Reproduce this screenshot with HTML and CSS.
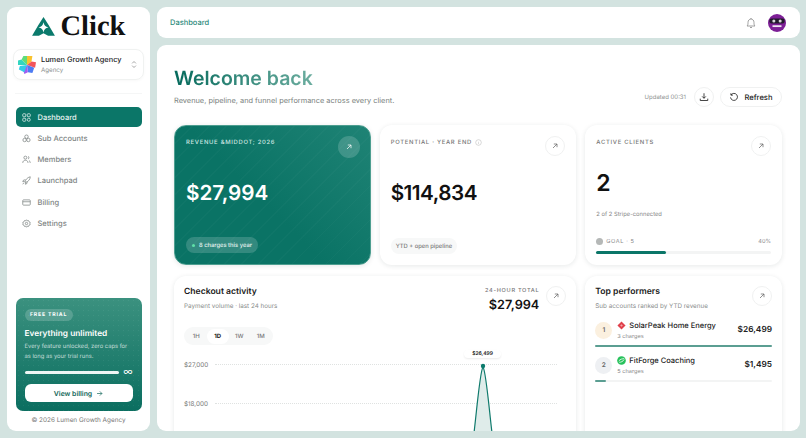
FILE: index.html
```html
<!DOCTYPE html>
<html lang="en">
  <head>
    <meta charset="UTF-8" />
    <meta name="viewport" content="width=device-width, initial-scale=1.0" />
    <title>Dashboard</title>
    <link rel="stylesheet" href="styles.css">
  </head>
  <body>
    <aside class="sidebar">
      <div class="brand">
        <svg class="brand-mark" viewBox="0 0 24 21"><path fill="#0b7a6c" d="M12 0l5.2 8.2L24 19.6h-7.2L12 17l-4.800 2.600H0L6.800 8.200z"/><path fill="#fff" d="M12 5.500c.6 3.300 2 4.800 5.200 5.400-3.200.6-4.600 2.100-5.200 5.400-.6-3.300-2-4.800-5.200-5.400 3.200-.6 4.600-2.100 5.200-5.400z"/></svg>
        <span class="brand-name">Click</span>
      </div>

      <div class="org">
        <svg class="org-logo" viewBox="0 0 20 20">
          <path fill="#f9c22e" d="M10 0h6l-1 6-5 4z"/>
          <path fill="#f2545b" d="M10 10l5-4 5 1-1 6z"/>
          <path fill="#4d7cf3" d="M10 10l8 3-2 6-5-1z"/>
          <path fill="#a05cf0" d="M10 10l1 8-4 2-1-4z"/>
          <path fill="#35cbe8" d="M10 10l-3 8-6-3 1-4z"/>
          <path fill="#33d6c0" d="M10 10H0V5l4-1z"/>
          <path fill="#5fdc7a" d="M10 10L4 4l2-4h4z"/>
        </svg>
        <div class="org-text">
          <div class="org-name">Lumen Growth Agency</div>
          <div class="org-type">Agency</div>
        </div>
        <svg class="org-caret" viewBox="0 0 8 12"><path d="M1.5 4.500L4 2l2.500 2.500M1.500 7.500L4 10l2.500-2.500"/></svg>
      </div>

      <div class="side-rule"></div>

      <nav class="nav">
        <a class="nav-item active"><svg viewBox="0 0 12 12"><rect x="1" y="1" width="4" height="4" rx="1"/><rect x="7" y="1" width="4" height="4" rx="1"/><rect x="1" y="7" width="4" height="4" rx="1"/><rect x="7" y="7" width="4" height="4" rx="2"/></svg>Dashboard</a>
        <a class="nav-item"><svg viewBox="0 0 12 12"><circle cx="6" cy="3.600" r="2.300"/><circle cx="3.500" cy="8" r="2.300"/><circle cx="8.500" cy="8" r="2.300"/></svg>Sub Accounts</a>
        <a class="nav-item"><svg viewBox="0 0 12 12"><circle cx="4.500" cy="3.500" r="2"/><path d="M1 10.500c0-2.200 1.500-3.500 3.500-3.500s3.500 1.300 3.500 3.500M8 1.700a2 2 0 010 3.700M9.300 7.300c1 .5 1.700 1.600 1.700 3.200"/></svg>Members</a>
        <a class="nav-item"><svg viewBox="0 0 12 12"><path d="M4 8C4.500 5 7 2 11 1c0 4-3 6.500-6 7.500zM4.500 5L2 5.500 1 7.500l2.500 0M7 7.500l-.5 2.500-2 1 0-2.500M2.500 9L1 11"/></svg>Launchpad</a>
        <a class="nav-item"><svg viewBox="0 0 12 12"><rect x="1" y="2.500" width="10" height="7" rx="1"/><path d="M1 5h10"/></svg>Billing</a>
        <a class="nav-item"><svg viewBox="0 0 12 12"><circle cx="6" cy="6" r="1.600"/><path d="M6 1l1 1.400 1.700-.3.600 1.600 1.600.7-.3 1.600.3 1.600-1.600.7-.6 1.600-1.700-.3L6 11l-1-1.400-1.700.3-.6-1.600-1.600-.7.3-1.600-.3-1.600 1.600-.7.6-1.600 1.700.3z"/></svg>Settings</a>
      </nav>

      <div class="trial">
        <span class="trial-tag">FREE TRIAL</span>
        <div class="trial-title">Everything unlimited</div>
        <p class="trial-copy">Every feature unlocked, zero caps for as long as your trial runs.</p>
        <div class="trial-meter"><div class="trial-bar"></div><span class="trial-inf">∞</span></div>
        <button class="trial-btn">View billing <svg viewBox="0 0 10 10"><path d="M1.500 5h7M5.500 2l3 3-3 3"/></svg></button>
      </div>
      <div class="side-foot">© 2026 Lumen Growth Agency</div>
    </aside>

    <div class="right">
      <header class="topbar">
        <span class="crumb">Dashboard</span>
        <div class="top-actions">
          <svg class="bell" viewBox="0 0 12 12"><path d="M2 9c.8-.8 1-1.500 1-3.500C3 3.500 4.300 2 6 2s3 1.500 3 3.500c0 2 .2 2.700 1 3.500zM5 10.500h2M6 1v1"/></svg>
          <svg class="avatar" viewBox="0 0 20 20"><circle cx="10" cy="10" r="10" fill="#7d1f96"/><rect x="1.500" y="5" width="17" height="5.500" rx="2.500" fill="#221a2c"/><circle cx="6.500" cy="7.700" r="1.700" fill="#d8d8d8"/><circle cx="13.500" cy="7.700" r="1.700" fill="#d8d8d8"/><rect x="5" y="12.500" width="10" height="2" fill="#efe6f2"/></svg>
        </div>
      </header>

      <main class="main">
        <div class="page-head">
          <div>
            <h1 class="welcome">Welcome back</h1>
            <p class="welcome-sub">Revenue, pipeline, and funnel performance across every client.</p>
          </div>
          <div class="head-actions">
            <span class="updated">Updated 00:31</span>
            <button class="round-btn"><svg viewBox="0 0 12 12"><path d="M6 1.500v6M3.800 5.300L6 7.500l2.200-2.200M1.500 8v2.200h9V8"/></svg></button>
            <button class="refresh"><svg viewBox="0 0 12 12"><path d="M2.500 3.500A4.200 4.200 0 111.800 6.500M2.300 1.500v2.300h2.300"/></svg>Refresh</button>
          </div>
        </div>

        <div class="grid">
          <section class="card stat hero">
            <div class="stat-top">
              <span class="label">REVENUE &amp;MIDDOT; 2026</span>
              <button class="arrow-btn"><svg viewBox="0 0 10 10"><path d="M2.500 7.500l5-5M3.500 2.500h4v4"/></svg></button>
            </div>
            <div class="stat-value">$27,994</div>
            <span class="chip"><i class="chip-dot"></i>8 charges this year</span>
          </section>

          <section class="card stat">
            <div class="stat-top">
              <span class="label">POTENTIAL · YEAR END <svg class="info" viewBox="0 0 10 10"><circle cx="5" cy="5" r="4"/><path d="M5 4.500v2.500M5 3v.4"/></svg></span>
              <button class="arrow-btn"><svg viewBox="0 0 10 10"><path d="M2.500 7.500l5-5M3.500 2.500h4v4"/></svg></button>
            </div>
            <div class="stat-value tight">$114,834</div>
            <span class="chip">YTD + open pipeline</span>
          </section>

          <section class="card stat">
            <div class="stat-top">
              <span class="label">ACTIVE CLIENTS</span>
              <button class="arrow-btn"><svg viewBox="0 0 10 10"><path d="M2.500 7.500l5-5M3.500 2.500h4v4"/></svg></button>
            </div>
            <div class="stat-value clients">2</div>
            <div class="stat-note">2 of 2 Stripe-connected</div>
            <div class="goal-row">
              <span class="goal"><i class="goal-dot"></i>GOAL · 5</span><span class="goal-pct">40%</span>
            </div>
            <div class="track"><div class="fill" style="width: 40%"></div></div>
          </section>

          <section class="card activity">
            <div class="activity-head">
              <div>
                <h2 class="card-title">Checkout activity</h2>
                <div class="card-sub">Payment volume · last 24 hours</div>
              </div>
              <div class="total">
                <div class="total-text">
                  <div class="total-label">24-HOUR TOTAL</div>
                  <div class="total-value">$27,994</div>
                </div>
                <button class="arrow-btn"><svg viewBox="0 0 10 10"><path d="M2.500 7.500l5-5M3.500 2.500h4v4"/></svg></button>
              </div>
            </div>
            <div class="ranges">
              <span>1H</span><span class="on">1D</span><span>1W</span><span>1M</span>
            </div>
            <div class="chart">
              <div class="chart-row"><span>$27,000</span><i></i></div>
              <div class="chart-row"><span>$18,000</span><i></i></div>
              <svg class="peak" viewBox="0 0 20 70">
                <path class="peak-area" d="M1 70C4 45 7 8 10 4c3 4 6 41 9 66z"/>
                <path class="peak-line" d="M1 70C4 45 7 8 10 4c3 4 6 41 9 66"/>
                <circle cx="10" cy="3" r="2.200" fill="#0b7a6c"/>
              </svg>
              <div class="peak-tip">$26,499</div>
            </div>
          </section>

          <section class="card performers">
            <div class="perf-head">
              <div>
                <h2 class="card-title">Top performers</h2>
                <div class="card-sub">Sub accounts ranked by YTD revenue</div>
              </div>
              <button class="arrow-btn"><svg viewBox="0 0 10 10"><path d="M2.500 7.500l5-5M3.500 2.500h4v4"/></svg></button>
            </div>
            <div class="perf">
              <div class="perf-row">
                <span class="rank gold">1</span>
                <div class="perf-info">
                  <div class="perf-name"><svg viewBox="0 0 10 10"><path fill="#e0414c" d="M5 .5L9.500 5 5 9.500.5 5z"/><path fill="#f4a3a8" d="M5 3.500L6.500 5 5 6.500 3.500 5z"/></svg>SolarPeak Home Energy</div>
                  <div class="perf-sub">3 charges</div>
                </div>
                <span class="perf-amt">$26,499</span>
              </div>
              <div class="perf-track"><div class="perf-fill" style="width: 100%"></div></div>
            </div>
            <div class="perf">
              <div class="perf-row">
                <span class="rank silver">2</span>
                <div class="perf-info">
                  <div class="perf-name"><svg viewBox="0 0 10 10"><circle cx="5" cy="5" r="4.800" fill="#27c25c"/><path d="M2 5.500c1.500-2 4-2.500 6-2.500M2.500 7c2 0 4-1 5.500-3" fill="none" stroke="#fff" stroke-width=".9"/></svg>FitForge Coaching</div>
                  <div class="perf-sub">5 charges</div>
                </div>
                <span class="perf-amt">$1,495</span>
              </div>
              <div class="perf-track"><div class="perf-fill" style="width: 6%"></div></div>
            </div>
          </section>
        </div>
      </main>
    </div>
  </body>
</html>
```

FILE: styles.css
```css
*,
body {
  margin: 0;
  padding: 0;
  box-sizing: border-box;
}
body {
  background: #d3e3e0;
  height: 100vh;
  width: 100vw;
  overflow: hidden;
  display: flex;
  gap: 7px;
  padding: 7px 6px 7px 7px;
  font-family: Inter, "Liberation Sans", sans-serif;
  text-rendering: geometricPrecision;
  color: #111;
}
button {
  font-family: inherit;
  text-rendering: inherit;
  border: none;
  background: none;
}
svg {
  display: block;
}

/* sidebar */
.sidebar {
  width: 143px;
  flex: none;
  background: #fff;
  border-radius: 9px;
  padding: 0 6px;
  display: flex;
  flex-direction: column;
}
.brand {
  height: 38px;
  display: flex;
  align-items: center;
  justify-content: center;
  gap: 6px;
  margin-top: 1px;
}
.brand-mark {
  width: 23px;
  height: 20px;
}
.brand-name {
  font-family: "Liberation Serif", serif;
  font-weight: 700;
  font-size: 28.5px;
  line-height: 1;
  color: #111;
}
.org {
  margin-top: 3px;
  height: 31px;
  border: 1px solid #f0f2f1;
  border-radius: 8px;
  display: flex;
  align-items: center;
  padding: 0 6px 0 4px;
  gap: 5px;
  box-shadow: 0 1px 3px rgba(0, 0, 0, 0.03);
}
.org-logo {
  width: 18px;
  height: 18px;
  flex: none;
}
.org-text {
  flex: 1;
  min-width: 0;
}
.org-name {
  font-size: 7.4px;
  font-weight: 500;
  line-height: 10px;
  white-space: nowrap;
  color: #222;
}
.org-type {
  font-size: 6.2px;
  line-height: 9px;
  margin-top: 1px;
  color: #8a8f8e;
}
.org-caret {
  width: 6px;
  height: 9px;
  flex: none;
  fill: none;
  stroke: #888;
  stroke-width: 1;
}
.side-rule {
  height: 1px;
  background: #f5f6f6;
  margin: 13px 2px 13px;
}
.nav {
  display: flex;
  flex-direction: column;
  gap: 1.3px;
  padding: 0 2.5px;
}
.nav-item {
  height: 20px;
  border-radius: 5px;
  display: flex;
  align-items: center;
  gap: 7px;
  padding: 0 6px;
  font-size: 7.5px;
  font-weight: 500;
  color: #7e8483;
}
.nav-item svg {
  width: 9px;
  height: 9px;
  fill: none;
  stroke: currentColor;
  stroke-width: 1;
  flex: none;
}
.nav-item.active {
  background: #0b7668;
  color: #e8f3f1;
}
.trial {
  margin: auto 2.5px 0;
  height: 113px;
  border-radius: 7px;
  padding: 11px 9px 0;
  color: #fff;
  background:
    radial-gradient(rgba(255, 255, 255, 0.06) 0.6px, transparent 0.8px) 0 0 / 5px 5px,
    linear-gradient(180deg, #3b917f 0%, #0b6e60 100%);
}
.trial-tag {
  display: block;
  width: max-content;
  height: 12px;
  line-height: 12px;
  padding: 0 5.5px;
  border-radius: 6px;
  background: rgba(255, 255, 255, 0.18);
  font-size: 5.2px;
  font-weight: 700;
  letter-spacing: 0.8px;
}
.trial-title {
  font-size: 8.3px;
  font-weight: 600;
  margin-top: 7px;
  line-height: 12px;
}
.trial-copy {
  font-size: 5.8px;
  line-height: 9.5px;
  margin-top: 2px;
  color: rgba(255, 255, 255, 0.72);
}
.trial-meter {
  display: flex;
  align-items: center;
  gap: 4px;
  margin-top: 6px;
  height: 10px;
}
.trial-bar {
  flex: 1;
  height: 3px;
  border-radius: 2px;
  background: #eef6f4;
}
.trial-inf {
  font-size: 10px;
  line-height: 10px;
}
.trial-btn {
  margin-top: 7px;
  width: 100%;
  height: 18px;
  border-radius: 6px;
  background: #fff;
  color: #15685b;
  font-size: 6.9px;
  font-weight: 600;
  display: flex;
  align-items: center;
  justify-content: center;
  gap: 4px;
}
.trial-btn svg {
  width: 7px;
  height: 7px;
  fill: none;
  stroke: currentColor;
  stroke-width: 1;
}
.side-foot {
  height: 20px;
  line-height: 18px;
  text-align: center;
  font-size: 6.4px;
  color: #777;
}

/* right side */
.right {
  flex: 1;
  min-width: 0;
  display: flex;
  flex-direction: column;
  gap: 7px;
}
.topbar {
  height: 31px;
  flex: none;
  background: #fff;
  border-radius: 9px;
  display: flex;
  align-items: center;
  justify-content: space-between;
  padding: 0 14px 0 13px;
}
.crumb {
  font-size: 7.5px;
  font-weight: 500;
  color: #2c8a7b;
}
.top-actions {
  display: flex;
  align-items: center;
  gap: 11px;
}
.bell {
  width: 12px;
  height: 12px;
  fill: none;
  stroke: #888;
  stroke-width: 0.8;
}
.avatar {
  width: 18px;
  height: 18px;
}
.main {
  flex: 1;
  min-height: 0;
  background: #fff;
  border-radius: 9px;
  overflow: hidden;
  padding: 21px 18px 0 17px;
}
.page-head {
  display: flex;
  justify-content: space-between;
  align-items: flex-start;
  height: 59px;
}
.welcome {
  font-size: 19.5px;
  font-weight: 600;
  line-height: 24px;
  background: linear-gradient(90deg, #056a5c 0%, #6cad9f 100%);
  -webkit-background-clip: text;
  background-clip: text;
  color: transparent;
  width: max-content;
}
.welcome-sub {
  font-size: 7.4px;
  margin-top: 6px;
  color: #7a7f7e;
}
.head-actions {
  display: flex;
  align-items: center;
  gap: 6px;
  margin-top: 21px;
}
.updated {
  font-size: 6px;
  color: #8f9392;
  margin-right: 2px;
}
.round-btn {
  width: 20px;
  height: 20px;
  border-radius: 50%;
  border: 1px solid #f0f1f1;
  display: grid;
  place-items: center;
}
.round-btn svg {
  width: 10px;
  height: 10px;
  fill: none;
  stroke: #222;
  stroke-width: 1;
}
.refresh {
  height: 20px;
  width: 62px;
  border: 1px solid #f0f1f1;
  border-radius: 10px;
  display: flex;
  align-items: center;
  justify-content: center;
  gap: 5px;
  font-size: 7.6px;
  font-weight: 500;
  color: #222;
}
.refresh svg {
  width: 10px;
  height: 10px;
  fill: none;
  stroke: #222;
  stroke-width: 1;
}
.grid {
  display: grid;
  grid-template-columns: repeat(3, 1fr);
  gap: 11px 9px;
}
.card {
  background: #fff;
  border-radius: 12px;
  box-shadow: 0 1px 5px rgba(20, 40, 36, 0.1);
}
.stat {
  height: 140px;
  padding: 11px;
  display: flex;
  flex-direction: column;
  align-items: flex-start;
}
.stat-top {
  width: 100%;
  display: flex;
  justify-content: space-between;
  align-items: flex-start;
  height: 24px;
}
.label {
  font-size: 5.9px;
  font-weight: 500;
  letter-spacing: 0.7px;
  color: #777;
  display: flex;
  align-items: center;
  gap: 3px;
  margin-top: 3px;
}
.info {
  width: 7px;
  height: 7px;
  fill: none;
  stroke: #bbb;
  stroke-width: 0.8;
}
.arrow-btn {
  width: 20px;
  height: 20px;
  border-radius: 50%;
  border: 1px solid #f0f1f1;
  display: grid;
  place-items: center;
  flex: none;
}
.arrow-btn svg {
  width: 8px;
  height: 8px;
  fill: none;
  stroke: #666;
  stroke-width: 0.9;
}
.stat-value {
  font-size: 20.7px;
  font-weight: 600;
  line-height: 28px;
  margin-top: 19px;
  color: #111;
}
.tight {
  letter-spacing: -0.5px;
}
.stat .chip {
  margin-top: auto;
  height: 16px;
  border-radius: 8px;
  background: #f7f8f8;
  color: #777;
  font-size: 5.8px;
  font-weight: 500;
  padding: 0 5px;
  display: flex;
  align-items: center;
  gap: 4px;
}
.hero {
  color: #fff;
  border: 1px solid #4d9e90;
  padding: 10px 10px 10px 11px;
  background:
    repeating-linear-gradient(135deg, rgba(255, 255, 255, 0.02) 0 1px, transparent 1px 12px),
    linear-gradient(45deg, #0a7365 45%, #1f8375 100%);
}
.hero .label {
  color: #cfe7e2;
}
.hero .stat-value {
  color: #fff;
}
.hero .arrow-btn {
  width: 22px;
  height: 22px;
  background: rgba(255, 255, 255, 0.17);
  border: none;
}
.hero .arrow-btn svg {
  stroke: #fff;
}
.hero .chip {
  background: rgba(255, 255, 255, 0.17);
  color: #e6f3f0;
  padding: 0 6px;
  margin-bottom: 1px;
}
.chip-dot {
  width: 3px;
  height: 3px;
  border-radius: 50%;
  background: #5fe0a8;
}
.clients {
  font-size: 23px;
  margin-top: 9px;
}
.stat-note {
  font-size: 5.8px;
  color: #888;
  margin-top: 14px;
}
.goal-row {
  width: 100%;
  display: flex;
  justify-content: space-between;
  align-items: center;
  margin-top: auto;
  font-size: 5.6px;
  color: #888;
}
.goal {
  display: flex;
  align-items: center;
  gap: 3px;
  letter-spacing: 0.6px;
}
.goal-dot {
  width: 7px;
  height: 7px;
  border-radius: 50%;
  background: #b5b8b7;
}
.track {
  width: 100%;
  height: 3px;
  margin: 6px 0 0;
  border-radius: 2px;
  background: #f3f4f4;
}
.fill {
  height: 100%;
  border-radius: 2px;
  background: #0b7668;
}
.activity {
  grid-column: span 2;
  height: 170px;
  padding: 10px;
}
.activity-head {
  display: flex;
  justify-content: space-between;
  align-items: flex-start;
}
.card-title {
  font-size: 8.6px;
  font-weight: 600;
  line-height: 11px;
  margin-top: 1px;
  color: #1a1a1a;
}
.card-sub {
  font-size: 6.3px;
  margin-top: 4px;
  color: #8a8e8d;
}
.total {
  display: flex;
  gap: 7px;
  align-items: flex-start;
}
.total-text {
  text-align: right;
}
.total-label {
  font-size: 5.6px;
  font-weight: 500;
  letter-spacing: 0.7px;
  color: #777;
  margin-top: 2px;
}
.total-value {
  font-size: 12.7px;
  font-weight: 600;
  line-height: 17px;
  margin-top: 3px;
}
.ranges {
  display: inline-flex;
  height: 18px;
  align-items: center;
  margin-top: 13px;
  padding: 0 1.5px;
  border-radius: 9px;
  background: #f7f8f8;
}
.ranges span {
  width: 21.5px;
  text-align: center;
  font-size: 6px;
  font-weight: 500;
  color: #777;
  line-height: 15px;
}
.ranges .on {
  background: #fff;
  border-radius: 8px;
  font-weight: 700;
  color: #222;
}
.chart {
  position: relative;
}
.chart-row {
  height: 39px;
  display: flex;
  align-items: center;
  gap: 7px;
  font-size: 6.3px;
  color: #777;
}
.chart-row i {
  flex: 1;
  border-top: 1px dotted #dfe2e1;
  margin-right: 9px;
}
.peak {
  position: absolute;
  left: 289px;
  top: 18px;
  width: 20px;
  height: 70px;
}
.peak-area {
  fill: #dfecea;
}
.peak-line {
  fill: none;
  stroke: #0f7a6c;
  stroke-width: 1.2;
}
.peak-tip {
  position: absolute;
  left: 280px;
  top: 5px;
  width: 37px;
  height: 8px;
  line-height: 8px;
  text-align: center;
  background: #fff;
  border-radius: 5px;
  font-size: 5px;
  font-weight: 600;
  box-shadow: 0 1px 2px rgba(0, 0, 0, 0.08);
}
.performers {
  height: 170px;
  padding: 10px;
}
.perf-head {
  display: flex;
  justify-content: space-between;
  align-items: flex-start;
  margin-bottom: 8px;
}
.perf {
  margin-bottom: 6.5px;
}
.perf-row {
  display: flex;
  align-items: center;
  gap: 5px;
  height: 24px;
}
.rank {
  width: 17px;
  height: 17px;
  border-radius: 50%;
  display: grid;
  place-items: center;
  font-size: 6.5px;
  font-weight: 600;
  color: #666;
  flex: none;
}
.gold {
  background: #fbf0df;
}
.silver {
  background: #eef0f3;
}
.perf-info {
  flex: 1;
  min-width: 0;
}
.perf-name {
  display: flex;
  align-items: center;
  gap: 3px;
  font-size: 7.5px;
  font-weight: 500;
  line-height: 11px;
  white-space: nowrap;
  color: #222;
}
.perf-name svg {
  width: 9px;
  height: 9px;
  flex: none;
}
.perf-sub {
  font-size: 5.6px;
  color: #888;
  margin-top: 3px;
}
.perf-amt {
  font-size: 8.3px;
  font-weight: 600;
  color: #222;
}
.perf-track {
  height: 2px;
  margin-top: 2.5px;
  border-radius: 1px;
  background: #f3f4f4;
}
.perf-fill {
  height: 100%;
  border-radius: 1px;
  background: #5b9e92;
}
```
